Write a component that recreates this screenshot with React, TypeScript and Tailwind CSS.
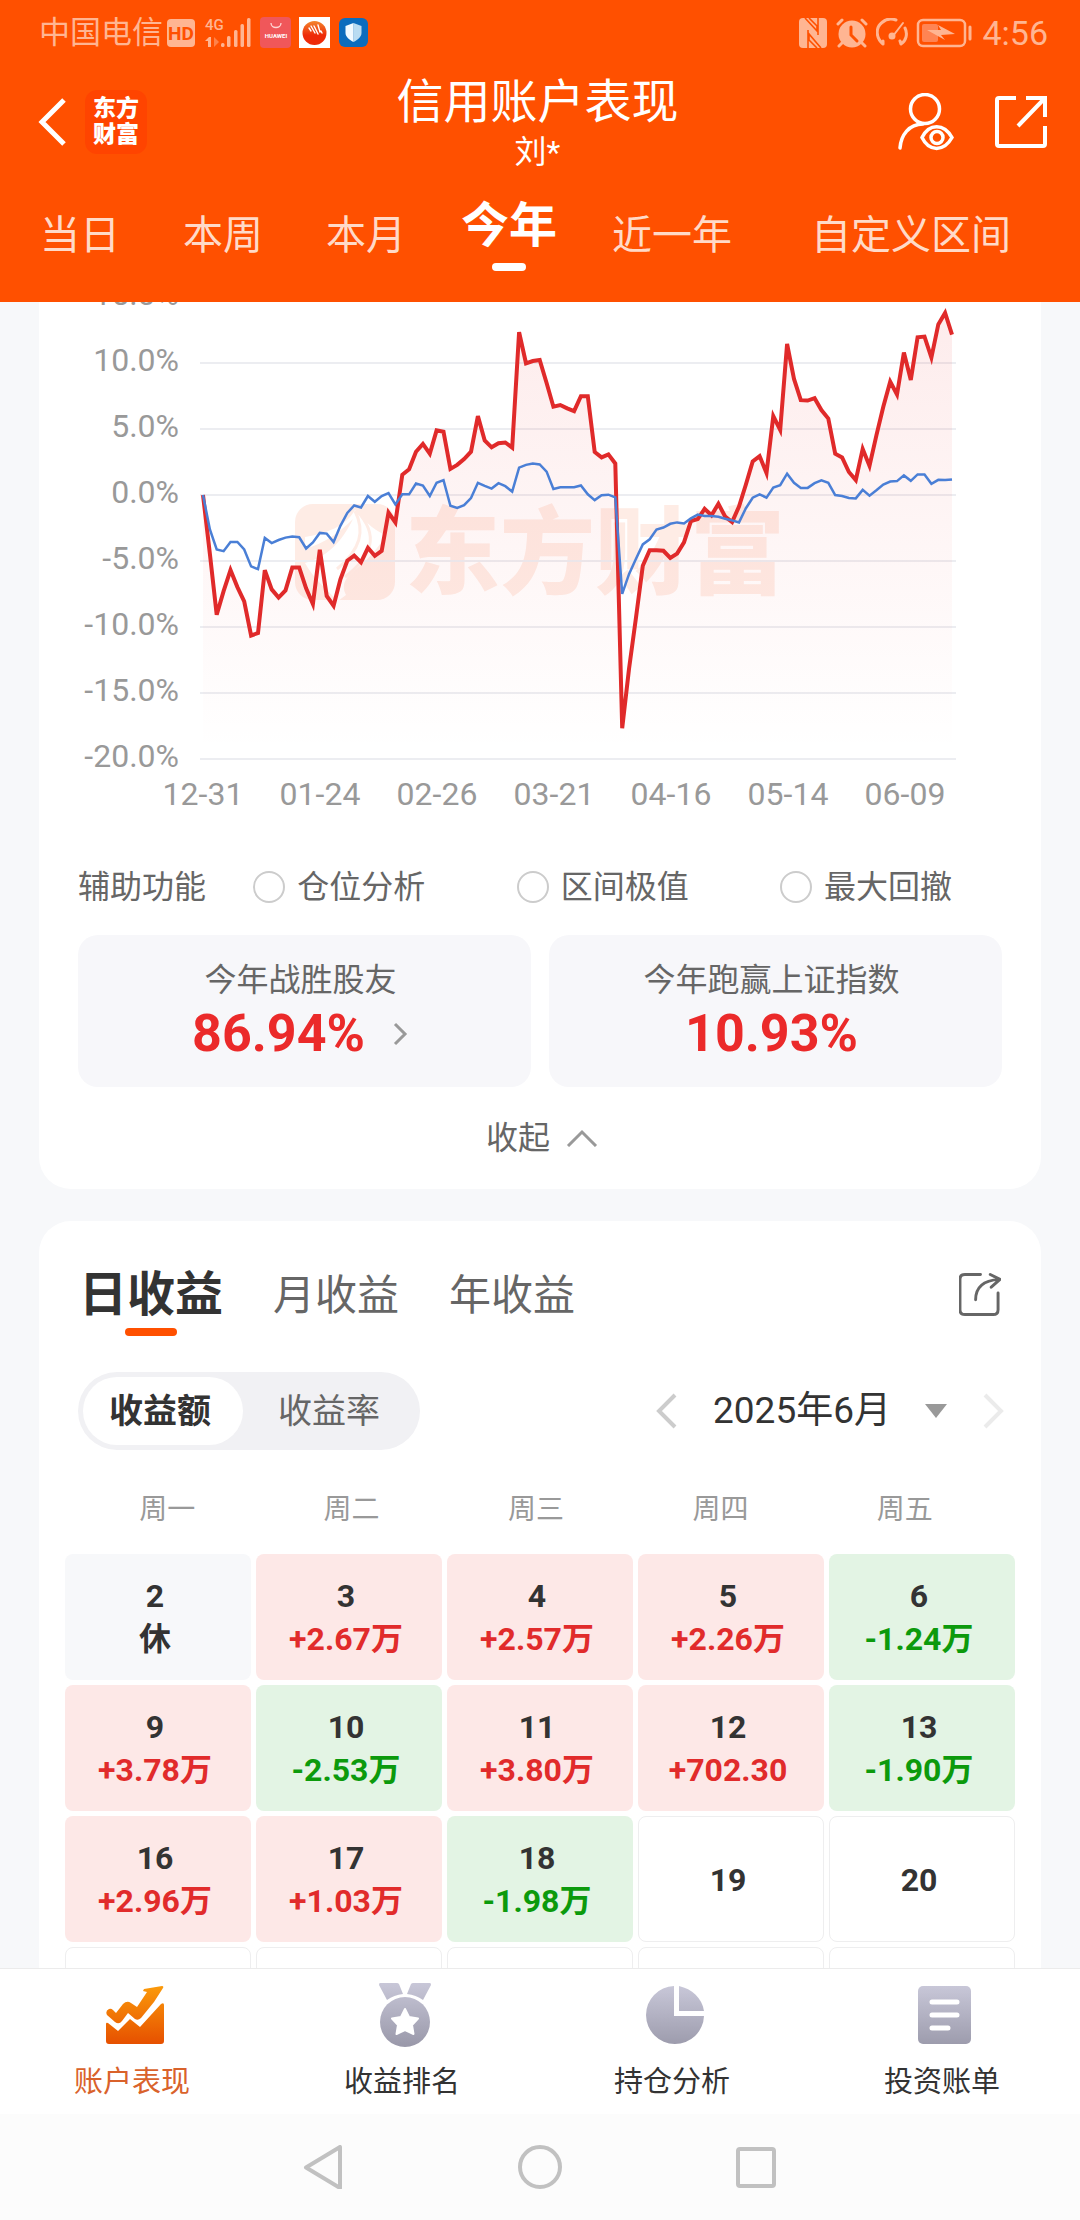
import type { ReactNode } from 'react';
import clsx from 'clsx';

// Plot-space heights: the zero line sits at 606, one percent is 39 units.
const ACCOUNT = [
  606, 780, 960, 890, 828, 878, 920, 1021, 1014, 828, 885, 909, 888, 820, 820, 882, 928, 768, 904, 933,
  855, 800, 785, 805, 762, 786, 771, 658, 687, 546, 530, 478, 455, 484, 415, 419, 529, 517, 500, 478,
  373, 445, 465, 453, 451, 466, 125, 217, 210, 207, 275, 345, 340, 350, 358, 314, 314, 479, 495, 486,
  513, 1295, 1120, 970, 815, 769, 769, 771, 792, 779, 746, 683, 677, 647, 666, 632, 670, 686, 640, 575,
  507, 491, 541, 373, 414, 160, 263, 326, 327, 320, 355, 380, 484, 495, 538, 562, 470, 520, 430, 345,
  271, 309, 185, 266, 140, 138, 200, 102, 68, 132,
];

const INDEX = [
  606, 708, 767, 772, 745, 745, 767, 817, 825, 733, 748, 739, 732, 729, 731, 764, 746, 718, 720, 745,
  697, 659, 637, 643, 609, 626, 609, 600, 634, 604, 604, 572, 578, 609, 570, 562, 638, 644, 636, 615,
  570, 579, 587, 571, 580, 596, 525, 517, 513, 516, 537, 588, 583, 583, 583, 578, 604, 621, 607, 605,
  613, 898, 840, 795, 752, 737, 708, 702, 691, 687, 690, 675, 664, 668, 668, 670, 676, 681, 687, 645,
  614, 604, 614, 584, 577, 543, 570, 585, 585, 571, 563, 570, 606, 609, 615, 616, 591, 608, 592, 575,
  566, 565, 548, 564, 545, 545, 573, 561, 562, 560,
];

const Y_TICKS = ['15.0%', '10.0%', '5.0%', '0.0%', '-5.0%', '-10.0%', '-15.0%', '-20.0%'];
const X_TICKS = ['12-31', '01-24', '02-26', '03-21', '04-16', '05-14', '06-09'];

const PLOT_LEFT = 164;
const PLOT_RIGHT = 913;
const PLOT_ZERO = 193;
const PLOT_BOTTOM = 457;
const TICK_GAP = 66;
const UNITS_PER_TICK = 195;

const toPoints = (series: number[]) =>
  series
    .map((v, i) => {
      const x = PLOT_LEFT + (i * (PLOT_RIGHT - PLOT_LEFT)) / (series.length - 1);
      const y = PLOT_ZERO + ((v - 606) * TICK_GAP) / UNITS_PER_TICK;
      return `${x.toFixed(1)},${y.toFixed(1)}`;
    })
    .join(' ');

const PERIODS = ['当日', '本周', '本月', '今年', '近一年', '自定义区间'];

interface Day {
  day?: number;
  value?: string;
  tone: 'up' | 'down' | 'rest' | 'empty';
}

const DAYS: Day[] = [
  { day: 2, value: '休', tone: 'rest' },
  { day: 3, value: '+2.67万', tone: 'up' },
  { day: 4, value: '+2.57万', tone: 'up' },
  { day: 5, value: '+2.26万', tone: 'up' },
  { day: 6, value: '-1.24万', tone: 'down' },
  { day: 9, value: '+3.78万', tone: 'up' },
  { day: 10, value: '-2.53万', tone: 'down' },
  { day: 11, value: '+3.80万', tone: 'up' },
  { day: 12, value: '+702.30', tone: 'up' },
  { day: 13, value: '-1.90万', tone: 'down' },
  { day: 16, value: '+2.96万', tone: 'up' },
  { day: 17, value: '+1.03万', tone: 'up' },
  { day: 18, value: '-1.98万', tone: 'down' },
  { day: 19, tone: 'empty' },
  { day: 20, tone: 'empty' },
  { tone: 'empty' },
  { tone: 'empty' },
  { tone: 'empty' },
  { tone: 'empty' },
  { tone: 'empty' },
];

const CELL_TONE = {
  up: 'bg-[#fde8e7]',
  down: 'bg-[#e3f4e4]',
  rest: 'bg-[#f7f8fa]',
  empty: 'border border-[#eeeeef] bg-white',
};

const VALUE_TONE = {
  up: 'text-[#e12b2b]',
  down: 'text-[#0c9a0c]',
  rest: 'text-[#333]',
  empty: 'text-[#333]',
};

function StatusBar() {
  return (
    <div className="flex h-16 items-center justify-between pt-0.5 pr-8 pl-[39px] text-[#ffb592]">
      <div className="flex items-center">
        <span className="text-[31px] leading-8">中国电信</span>
        <span className="ml-1 flex h-7 w-7 items-center justify-center rounded bg-[#ffb592] text-[19px] font-bold leading-none text-[#ff5000]">
          HD
        </span>
        <svg className="ml-2.5 h-[30px] w-12 overflow-visible" viewBox="0 0 48 30" fill="currentColor">
          <text x="0" y="12" fontSize="15" fontWeight="500">4G</text>
          <path d="M0 23l4-4h2v10H3v-6z" />
          <path d="M9 19l5 5-5 5z" opacity="0.5" />
          <rect x="16" y="25" width="3.5" height="4" rx="1.5" />
          <rect x="22" y="18" width="3.5" height="11" rx="1.5" />
          <rect x="29" y="12" width="3.5" height="17" rx="1.5" />
          <rect x="35.5" y="6" width="3.5" height="23" rx="1.5" />
          <rect x="42" y="0" width="3.5" height="29" rx="1.5" />
        </svg>
        <svg className="ml-[7px] h-8 w-8" viewBox="0 0 32 32">
          <rect width="31" height="31" rx="4" fill="#f0575a" />
          <path d="M11 6c0 6 10 6 10 0" fill="none" stroke="#ffd5d3" strokeWidth="1.3" />
          <text x="16" y="20.5" textAnchor="middle" fontSize="6" fontWeight="700" fill="#fff">HUAWEI</text>
        </svg>
        <svg className="ml-[7px] h-8 w-8" viewBox="0 0 32 32">
          <defs>
            <linearGradient id="ball" x1="0" y1="0" x2="0" y2="1">
              <stop offset="0" stopColor="#f4862c" />
              <stop offset="0.6" stopColor="#ee2a08" />
            </linearGradient>
          </defs>
          <rect width="31" height="31" fill="#fff" />
          <circle cx="15.5" cy="16" r="12" fill="url(#ball)" />
          <path d="M10 11l2 3M12 9l4 7M15 9l4 8M19 8l2 7M22 14l1 2" stroke="#fff" strokeWidth="1.4" strokeLinecap="round" />
        </svg>
        <svg className="ml-[7px] h-8 w-8" viewBox="0 0 32 32">
          <rect x="1" y="1" width="29" height="29" rx="6" fill="#0c6cbd" />
          <path d="M15.5 6l8 3v7c0 4-4 7-8 9z" fill="#b9dcf2" />
          <path d="M15.5 6l-8 3v7c0 4 4 7 8 9z" fill="#f2faff" />
        </svg>
      </div>
      <div className="flex items-center gap-2">
        <svg className="h-[30px] w-[30px]" viewBox="0 0 30 30">
          <rect x="1" width="28" height="30" rx="4" fill="currentColor" />
          <path d="M7 0l12 13V8l-8-8M23 30L11 16v6l8 8M20 0v17M10 30V12" fill="none" stroke="#ff5000" strokeWidth="1.6" />
        </svg>
        <svg className="h-[30px] w-8" viewBox="0 0 32 30" fill="none" stroke="currentColor" strokeLinecap="round">
          <circle cx="16" cy="16" r="13.5" fill="currentColor" stroke="none" />
          <path d="M2 6l4-4M30 6l-4-4M6 25l-3 3M26 25l3 3" strokeWidth="3" />
          <path d="M15 9v8l6 6" stroke="#ff5000" strokeWidth="3" />
        </svg>
        <svg className="h-[30px] w-8" viewBox="0 0 32 30" fill="none" stroke="currentColor" strokeWidth="3" strokeLinecap="round">
          <path d="M7 26C0 20-1 10 6 4.5 10 1 15 0 20 2M25 26c5-3 7-10 4-16M7 26v-3M25 26l-1-3" />
          <path d="M17 18L27 5" strokeWidth="2" />
          <circle cx="16" cy="18" r="2" fill="currentColor" />
        </svg>
        <svg className="h-[30px] w-[58px]" viewBox="0 0 58 30" fill="none">
          <rect x="2" y="2" width="47" height="26" rx="5" stroke="currentColor" strokeWidth="2.5" />
          <rect x="6" y="6" width="16" height="18" rx="2" fill="#ff8453" />
          <path d="M54 9v12" stroke="currentColor" strokeWidth="3" strokeLinecap="round" />
          <path d="M11 12l14 0-3-5 17 9-14 1 4 5z" fill="currentColor" />
        </svg>
        <span className="text-[34px] leading-8">4:56</span>
      </div>
    </div>
  );
}

function Header() {
  return (
    <header className="shrink-0 bg-[#ff5000] pb-[31px] text-white">
      <StatusBar />
      <div className="grid grid-cols-[1fr_auto_1fr] items-center pt-2 pr-[33px] pl-9">
        <div className="flex items-center gap-[17px]">
          <button type="button" aria-label="返回">
            <svg className="h-12 w-8" viewBox="0 0 32 48" fill="none" stroke="currentColor" strokeWidth="5">
              <path d="M28 2L6 24l22 22" />
            </svg>
          </button>
          <span className="w-[62px] rounded-xl bg-[#ff4400] px-2 py-1.5 text-[23px] font-black leading-[26px]">
            东方 财富
          </span>
        </div>
        <div className="pr-2 text-center">
          <h1 className="text-[47px] leading-[60px]">信用账户表现</h1>
          <p className="text-[32px] leading-10">刘*</p>
        </div>
        <div className="flex items-center justify-end gap-10">
          <button type="button" aria-label="账户">
            <svg className="h-[58px] w-[58px]" viewBox="0 0 58 58" fill="none" stroke="currentColor" strokeWidth="3.5" strokeLinecap="round">
              <circle cx="28" cy="16" r="14.5" />
              <path d="M3 55c1-13 9-24 23-24" />
              <path d="M25 44.5c7-14.500 22-14.500 30 0-8 14.500-23 14.500-30 0z" />
              <circle cx="40" cy="44.5" r="6" />
            </svg>
          </button>
          <button type="button" aria-label="分享">
            <svg className="h-[52px] w-[52px]" viewBox="0 0 52 52" fill="none" stroke="currentColor" strokeWidth="4">
              <path d="M21 2H4Q2 2 2 4v44q0 2 2 2h44q2 0 2-2V30M31 2h19v19M50 2L23 30" />
            </svg>
          </button>
        </div>
      </div>
      <nav className="mt-[29px] flex items-center gap-[63px] px-10">
        {PERIODS.map((label) => {
          const active = label === '今年';
          return (
            <button
              key={label}
              type="button"
              className={clsx(
                'flex h-[70px] flex-col items-center whitespace-nowrap last:ml-4',
                active ? 'w-20 text-[48px] font-bold leading-[50px]' : 'text-[40px] leading-[70px] text-[#ffdac8]',
              )}
            >
              {label}
              {active && <span className="mt-3 h-2 w-[34px] rounded-full bg-white" />}
            </button>
          );
        })}
      </nav>
    </header>
  );
}

function PerformanceChart() {
  const account = toPoints(ACCOUNT);
  return (
    <svg className="block w-full" viewBox="0 0 1002 520" fill="none">
      <defs>
        <linearGradient id="area" gradientUnits="userSpaceOnUse" x1="0" y1="10" x2="0" y2="450">
          <stop offset="0" stopColor="#eb2a2a" stopOpacity="0.09" />
          <stop offset="1" stopColor="#eb2a2a" stopOpacity="0" />
        </linearGradient>
        <clipPath id="mark">
          <rect x="256" y="202" width="100" height="96" rx="18" />
        </clipPath>
      </defs>

      <g fill="#feece5">
        <rect x="256" y="202" width="100" height="96" rx="18" />
        <g clipPath="url(#mark)">
          <path d="M266 235c22-4 40-10 50-27 12 14 22 22 31 25-8 14-20 26-31 35-10 8-14 15-9 25l-8 6c-15-15-24-22-33-38 22-6 36-20 48-44-14 14-28 24-48 30z" fill="#fff" />
          <path d="M316 209c10 20 6 38-18 58M318 209c22 24 16 44-12 66" stroke="#feece5" strokeWidth="3" fill="none" />
        </g>
        <text x="366" y="285" fontSize="95" fontWeight="900">东方财富</text>
      </g>

      {Y_TICKS.map((tick, i) => (
        <g key={tick}>
          <path d={`M161 ${i * TICK_GAP - 5}H917`} stroke="#ecedf1" strokeWidth="2" />
          <text x="140" y={i * TICK_GAP + 3} textAnchor="end" fontSize="32" fill="#999">{tick}</text>
        </g>
      ))}
      {X_TICKS.map((tick, i) => (
        <text key={tick} x={164 + i * 117} y="503" textAnchor="middle" fontSize="32" fill="#999">{tick}</text>
      ))}

      <polygon points={`${PLOT_LEFT},${PLOT_BOTTOM} ${account} ${PLOT_RIGHT},${PLOT_BOTTOM}`} fill="url(#area)" />
      <polyline points={account} stroke="#e02a2a" strokeWidth="4" />
      <polyline points={toPoints(INDEX)} stroke="#4a7fd6" strokeWidth="2.5" />
    </svg>
  );
}

function StatBox({ label, value, children }: { label: string; value: string; children?: ReactNode }) {
  return (
    <div className="flex flex-1 flex-col items-center rounded-[20px] bg-[#f7f7fa] pt-6 pr-2 pb-5">
      <span className="text-[32px] leading-[42px] text-[#666]">{label}</span>
      <span className="flex items-center gap-7 text-[52px] font-bold leading-[66px] text-[#eb2a2a]">
        {value}
        {children}
      </span>
    </div>
  );
}

function PerformanceCard() {
  return (
    <section className="rounded-b-[32px] bg-white">
      <PerformanceChart />
      <fieldset className="mx-[39px] mt-[43px] flex items-center justify-between pr-[50px] text-[32px] leading-[44px] text-[#666]">
        <span>辅助功能</span>
        {['仓位分析', '区间极值', '最大回撤'].map((name, i) => (
          <label key={name} className={clsx('flex items-center gap-3', i > 0 && 'ml-11')}>
            <input type="radio" name="helper" className="h-8 w-8 appearance-none rounded-full border-2 border-[#ccc] bg-white" />
            {name}
          </label>
        ))}
      </fieldset>
      <div className="mx-[39px] mt-[26px] flex gap-[18px]">
        <StatBox label="今年战胜股友" value="86.94%">
          <svg className="h-6 w-4" viewBox="0 0 16 24" fill="none" stroke="#999" strokeWidth="3">
            <path d="M2 2l10 10L2 22" />
          </svg>
        </StatBox>
        <StatBox label="今年跑赢上证指数" value="10.93%" />
      </div>
      <button type="button" className="mx-auto flex items-center gap-4 pt-[29px] pb-[29px] pl-1 text-[32px] leading-[44px] text-[#666]">
        收起
        <svg className="h-[18px] w-8" viewBox="0 0 32 18" fill="none" stroke="#999" strokeWidth="3">
          <path d="M2 17L16 3l14 14" />
        </svg>
      </button>
    </section>
  );
}

function CalendarCard() {
  return (
    <section className="mt-8 rounded-t-[32px] bg-white pt-10">
      <div className="flex items-start justify-between px-10">
        <div className="flex items-center gap-[50px] text-[42px] text-[#666]">
          <button type="button" className="flex flex-col items-center text-[48px] font-bold leading-[68px] text-[#333]">
            日收益
            <span className="-mt-px h-2 w-[52px] rounded-full bg-[#ff5000]" />
          </button>
          <button type="button" className="pb-1.5 leading-[68px]">月收益</button>
          <button type="button" className="pb-1.5 leading-[68px]">年收益</button>
        </div>
        <button type="button" aria-label="分享收益" className="flex h-[66px] items-center">
          <svg className="h-11 w-[42px]" viewBox="1 0 43 44" fill="none" stroke="#666" strokeWidth="3" strokeLinecap="round" strokeLinejoin="round">
            <path d="M23 2H7Q2 2 2 7v31q0 5 5 5h29q5 0 5-5V21" />
            <path d="M18 28c0-13 8-20 24-21M33 2l10 5-9 8" />
          </svg>
        </button>
      </div>

      <div className="mt-9 flex items-center justify-between pr-9 pl-[39px]">
        <div className="flex rounded-full bg-[#f1f1f4] p-[5px] text-[34px] leading-[68px]">
          <button type="button" className="w-40 rounded-full bg-white pr-1.5 font-bold text-[#333]">收益额</button>
          <button type="button" className="w-[172px] text-[#666]">收益率</button>
        </div>
        <div className="flex items-center">
          <button type="button" aria-label="上个月">
            <svg className="h-9 w-[22px]" viewBox="0 0 22 36" fill="none" stroke="#ccc" strokeWidth="4">
              <path d="M20 2L4 18l16 16" />
            </svg>
          </button>
          <label className="ml-9 flex items-center">
            <select aria-label="月份" className="w-[212px] appearance-none bg-transparent text-[37px] leading-[48px] text-[#333]">
              <option>2025年6月</option>
            </select>
            <svg className="h-[14px] w-[22px]" viewBox="0 0 22 14" fill="#999">
              <path d="M0 0h22L11 14z" />
            </svg>
          </label>
          <button type="button" aria-label="下个月" className="ml-9">
            <svg className="h-9 w-[22px]" viewBox="0 0 22 36" fill="none" stroke="#ebebeb" strokeWidth="4">
              <path d="M2 2l16 16L2 34" />
            </svg>
          </button>
        </div>
      </div>

      <div className="mx-9 mt-10 grid grid-cols-5 pr-2 text-center text-[28px] leading-10 text-[#999]">
        {['周一', '周二', '周三', '周四', '周五'].map((w) => (
          <span key={w}>{w}</span>
        ))}
      </div>

      <div className="mx-[26px] mt-6 grid grid-cols-5 gap-[5px]">
        {DAYS.map(({ day, value, tone }, i) => (
          <button
            key={i}
            type="button"
            className={clsx(
              'flex h-[126px] flex-col items-center justify-center rounded-lg pt-0.5 pr-1.5 text-[32px] font-bold leading-[43px] text-[#333]',
              CELL_TONE[tone],
            )}
          >
            {day && <span>{day}</span>}
            {value && <span className={VALUE_TONE[tone]}>{value}</span>}
          </button>
        ))}
      </div>
    </section>
  );
}

const NAV_ITEMS = [
  {
    label: '账户表现',
    active: true,
    icon: (
      <svg className="h-[58px] w-[58px]" viewBox="0 0 58 58" fill="url(#hot)">
        <path d="M0 38q0-2 2-1l10 8 12-12 10 8 21-23q3-2 3 1v36q0 3-3 3H3q-3 0-3-3z" />
        <path d="M1 29q-2-4 2-6 2-1 4 1l3 3 7-9q4-4 8-1l6 4 10-15-4-1 1-2 18-3q2 0 1 2l-9 14-13 16q-3 3-6 1l-7-6-6 8q-3 4-7 1z" />
      </svg>
    ),
  },
  {
    label: '收益排名',
    icon: (
      <svg className="h-16 w-[52px]" viewBox="0 0 52 64" fill="url(#cool)">
        <path d="M1 0h17q1 0 2 1l4 10q-9 1-16 6L0 2Q0 0 1 0zM51 0H34q-1 0-2 1l-4 10q9 1 16 6l8-15q0-2-1-2z" />
        <circle cx="26" cy="39" r="25" />
        <path d="M26 26l4 8 9 1.500-6 6.500 1.500 9L26 47l-8.500 4 1.500-9-6-6.500 9-1.500z" fill="#fff" stroke="#fff" strokeWidth="2" strokeLinejoin="round" />
      </svg>
    ),
  },
  {
    label: '持仓分析',
    icon: (
      <svg className="h-[58px] w-[58px]" viewBox="0 0 58 58" fill="url(#cool)">
        <path d="M28 0v30h30A29 29 0 1 1 28 0z" />
        <path d="M33 0v25h25C56 12 46 3 33 0z" />
      </svg>
    ),
  },
  {
    label: '投资账单',
    icon: (
      <svg className="h-[58px] w-[54px]" viewBox="0 0 54 58" fill="url(#cool)">
        <rect width="53" height="58" rx="5" />
        <path d="M14 16h25M14 29h25M14 42h16" stroke="#fff" strokeWidth="5" strokeLinecap="round" />
      </svg>
    ),
  },
];

function BottomNav() {
  return (
    <nav className="grid shrink-0 grid-cols-4 border-t border-[#ebebeb] bg-white">
      <svg className="absolute h-0 w-0">
        <defs>
          <linearGradient id="hot" gradientUnits="userSpaceOnUse" x1="0" y1="0" x2="0" y2="58">
            <stop offset="0" stopColor="#fb9a0a" />
            <stop offset="1" stopColor="#e65000" />
          </linearGradient>
          <linearGradient id="cool" gradientUnits="userSpaceOnUse" x1="0" y1="0" x2="0" y2="62">
            <stop offset="0" stopColor="#c8c7d8" />
            <stop offset="1" stopColor="#9a99aa" />
          </linearGradient>
        </defs>
      </svg>
      {NAV_ITEMS.map(({ label, active, icon }) => (
        <a
          key={label}
          href="#"
          className={clsx('flex flex-col items-center pt-[14px] pb-3 text-[29px] leading-10', active ? 'text-[#d9622b]' : 'text-[#333]')}
        >
          <span className="mb-[15px] flex h-16 items-center">{icon}</span>
          <span className="pr-1.5">{label}</span>
        </a>
      ))}
    </nav>
  );
}

function SystemNav() {
  return (
    <div className="flex h-[106px] shrink-0 items-center justify-center gap-[172px] bg-[#fcfcfc]">
      <svg className="h-11 w-11" viewBox="0 0 44 44" fill="none" stroke="#c1c1c1" strokeWidth="4" strokeLinejoin="round">
        <path d="M38 2v41L4 22.5z" />
      </svg>
      <svg className="h-11 w-11" viewBox="0 0 44 44" fill="none" stroke="#c1c1c1" strokeWidth="4">
        <circle cx="22" cy="22" r="20" />
      </svg>
      <svg className="h-11 w-11" viewBox="0 0 44 44" fill="none" stroke="#c1c1c1" strokeWidth="4">
        <rect x="4" y="4" width="36" height="37" rx="2" />
      </svg>
    </div>
  );
}

export default function App() {
  return (
    <div className="flex h-screen flex-col overflow-hidden bg-[#f7f8fa] font-['Roboto','Noto_Sans_CJK_SC',sans-serif]">
      <Header />
      <main className="min-h-0 flex-1 overflow-hidden px-[39px]">
        <PerformanceCard />
        <CalendarCard />
      </main>
      <BottomNav />
      <SystemNav />
    </div>
  );
}
